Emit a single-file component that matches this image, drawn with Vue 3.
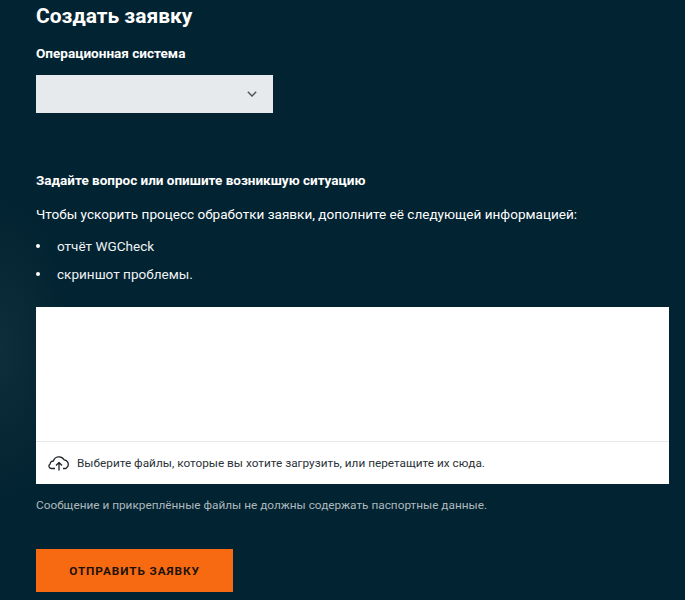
<script setup>
const items = ['отчёт WGCheck', 'скриншот проблемы.']
</script>

<template>
  <main class="page">
    <h1 class="title">Создать заявку</h1>
    <label class="label">Операционная система</label>
    <div class="select">
      <svg class="chevron" width="10" height="6" viewBox="0 0 10 6"><path d="M.8.8 5 5 9.2.8" fill="none" stroke="#555" stroke-width="1.5"/></svg>
    </div>
    <h2 class="question">Задайте вопрос или опишите возникшую ситуацию</h2>
    <p class="hint">Чтобы ускорить процесс обработки заявки, дополните её следующей информацией:</p>
    <ul class="list">
      <li v-for="item in items" :key="item">{{ item }}</li>
    </ul>
    <div class="editor">
      <div class="area"></div>
      <div class="upload">
        <svg class="cloud" width="22" height="16" viewBox="0 0 22 16" fill="none" stroke="#1d2328" stroke-width="1.3" stroke-linejoin="round"><path d="M7 13.5H3.2A2.4 2.4 0 0 1 2.2 9 3 3 0 0 1 5.4 6 5.8 5.8 0 0 1 16 4.8 4.5 4.5 0 0 1 18.8 12.6 2.4 2.4 0 0 1 17.5 13.5H15"/><path d="M11 15.5V7.5M8 10.5l3-3 3 3"/></svg>
        <span>Выберите файлы, которые вы хотите загрузить, или перетащите их сюда.</span>
      </div>
    </div>
    <p class="note">Сообщение и прикреплённые файлы не должны содержать паспортные данные.</p>
    <button class="submit">ОТПРАВИТЬ ЗАЯВКУ</button>
  </main>
</template>

<style>
body { margin: 0; background: #022331; }
</style>
<style scoped>
.page { box-sizing: border-box; height: 600px; overflow: hidden; padding: 4px 16px 0 36px; background: radial-gradient(ellipse 70px 150px at 0 350px, #0e2e3b, transparent), #022331; font-family: Roboto, sans-serif; color: #fff; }
.title { margin: 0; font-size: 21px; line-height: 24px; font-weight: 700; }
.label { display: block; margin-top: 16px; font-size: 13.55px; line-height: 18px; font-weight: 700; }
.select { display: flex; align-items: center; justify-content: flex-end; box-sizing: border-box; width: 237px; height: 38px; margin-top: 13px; padding-right: 16px; background: #e7eaec; }
.question { margin: 58px 0 0; font-size: 13.5px; line-height: 18px; font-weight: 700; }
.hint { margin: 15px 0 0; font-size: 13.55px; line-height: 20px; }
.list { margin: 12px 0 0; padding: 0; list-style: none; font-size: 13.55px; line-height: 20px; color: #eef2f4; }
.list li { display: flex; align-items: center; margin-bottom: 8px; }
.list li::before { content: ""; width: 4px; height: 4px; margin: 0 17px 0 0; border-radius: 50%; background: #fff; flex: none; }
.editor { margin-top: 23px; height: 177px; display: flex; flex-direction: column; background: #fff; color: #2b3238; }
.area { height: 134px; border-bottom: 1px solid #e6e8ea; }
.upload { display: flex; align-items: center; gap: 7px; height: 42px; padding-left: 12px; font-size: 11.8px; }
.note { margin: 13px 0 0; font-size: 11.8px; line-height: 16px; color: #aeb8bd; }
.submit { display: block; width: 197px; height: 43px; margin-top: 36px; border: 0; background: #f76a12; color: #1b1208; font: 700 11.8px Roboto, sans-serif; letter-spacing: 0.9px; }
</style>
